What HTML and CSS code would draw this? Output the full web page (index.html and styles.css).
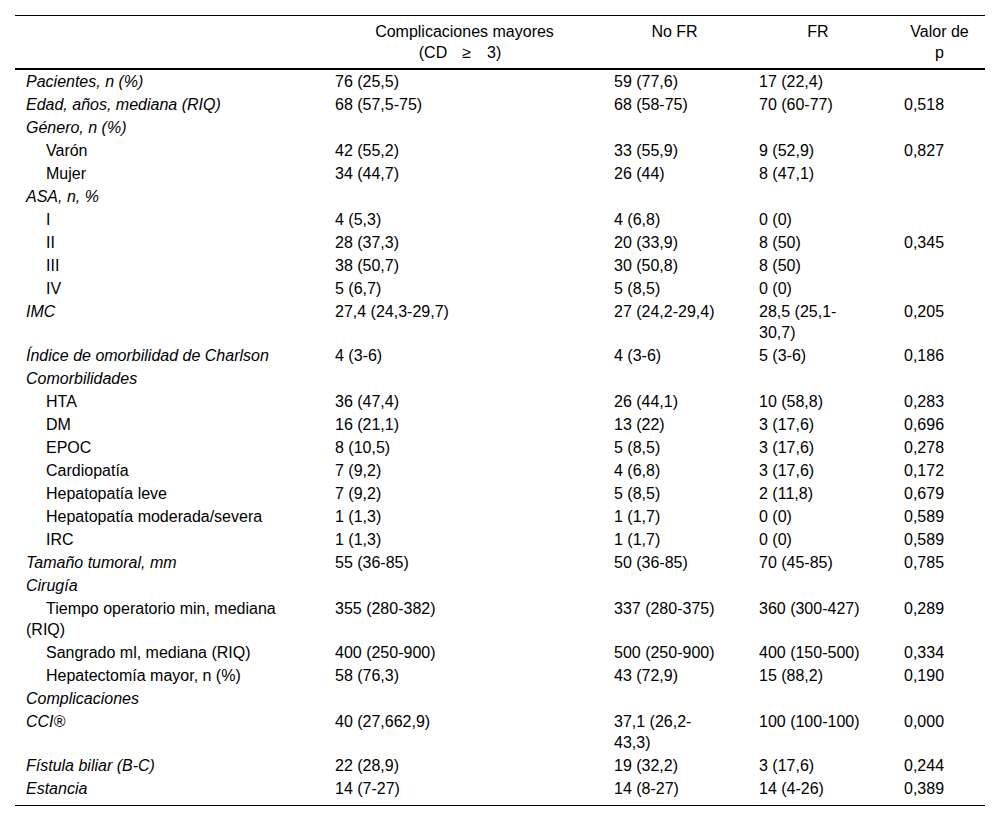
FILE: index.html
```html
<!DOCTYPE html>
<html lang="es">
<head>
<meta charset="utf-8">
<title>Tabla</title>
<link rel="stylesheet" href="styles.css">
</head>
<body>
<div class="page">
<table class="data">
  <colgroup>
    <col class="c1"><col class="c2"><col class="c3"><col class="c4"><col class="c5">
  </colgroup>
  <thead>
    <tr>
      <th class="h1"></th>
      <th class="h2">Complicaciones mayores<br><span class="cd">(CD<span class="gap g1"></span>≥<span class="gap g2"></span>3)<span class="gap g3"></span></span></th>
      <th class="h3">No FR</th>
      <th class="h4">FR</th>
      <th class="h5">Valor de<br>p</th>
    </tr>
  </thead>
  <tbody>
    <tr><td class="lab it">Pacientes, n (%)</td><td>76 (25,5)</td><td>59 (77,6)</td><td>17 (22,4)</td><td></td></tr>
    <tr><td class="lab it">Edad, años, mediana (RIQ)</td><td>68 (57,5-75)</td><td>68 (58-75)</td><td>70 (60-77)</td><td>0,518</td></tr>
    <tr><td class="lab it">Género, n (%)</td><td></td><td></td><td></td><td></td></tr>
    <tr><td class="lab sub">Varón</td><td>42 (55,2)</td><td>33 (55,9)</td><td>9 (52,9)</td><td>0,827</td></tr>
    <tr><td class="lab sub">Mujer</td><td>34 (44,7)</td><td>26 (44)</td><td>8 (47,1)</td><td></td></tr>
    <tr><td class="lab it">ASA, n, %</td><td></td><td></td><td></td><td></td></tr>
    <tr><td class="lab sub">I</td><td>4 (5,3)</td><td>4 (6,8)</td><td>0 (0)</td><td></td></tr>
    <tr><td class="lab sub">II</td><td>28 (37,3)</td><td>20 (33,9)</td><td>8 (50)</td><td>0,345</td></tr>
    <tr><td class="lab sub">III</td><td>38 (50,7)</td><td>30 (50,8)</td><td>8 (50)</td><td></td></tr>
    <tr><td class="lab sub">IV</td><td>5 (6,7)</td><td>5 (8,5)</td><td>0 (0)</td><td></td></tr>
    <tr><td class="lab it">IMC</td><td>27,4 (24,3-29,7)</td><td>27 (24,2-29,4)</td><td>28,5 (25,1-<br>30,7)</td><td>0,205</td></tr>
    <tr><td class="lab it">Índice de omorbilidad de Charlson</td><td>4 (3-6)</td><td>4 (3-6)</td><td>5 (3-6)</td><td>0,186</td></tr>
    <tr><td class="lab it">Comorbilidades</td><td></td><td></td><td></td><td></td></tr>
    <tr><td class="lab sub">HTA</td><td>36 (47,4)</td><td>26 (44,1)</td><td>10 (58,8)</td><td>0,283</td></tr>
    <tr><td class="lab sub">DM</td><td>16 (21,1)</td><td>13 (22)</td><td>3 (17,6)</td><td>0,696</td></tr>
    <tr><td class="lab sub">EPOC</td><td>8 (10,5)</td><td>5 (8,5)</td><td>3 (17,6)</td><td>0,278</td></tr>
    <tr><td class="lab sub">Cardiopatía</td><td>7 (9,2)</td><td>4 (6,8)</td><td>3 (17,6)</td><td>0,172</td></tr>
    <tr><td class="lab sub">Hepatopatía leve</td><td>7 (9,2)</td><td>5 (8,5)</td><td>2 (11,8)</td><td>0,679</td></tr>
    <tr><td class="lab sub">Hepatopatía moderada/severa</td><td>1 (1,3)</td><td>1 (1,7)</td><td>0 (0)</td><td>0,589</td></tr>
    <tr><td class="lab sub">IRC</td><td>1 (1,3)</td><td>1 (1,7)</td><td>0 (0)</td><td>0,589</td></tr>
    <tr><td class="lab it">Tamaño tumoral, mm</td><td>55 (36-85)</td><td>50 (36-85)</td><td>70 (45-85)</td><td>0,785</td></tr>
    <tr><td class="lab it">Cirugía</td><td></td><td></td><td></td><td></td></tr>
    <tr><td class="lab sub">Tiempo operatorio min, mediana<br>(RIQ)</td><td>355 (280-382)</td><td>337 (280-375)</td><td>360 (300-427)</td><td>0,289</td></tr>
    <tr><td class="lab sub">Sangrado ml, mediana (RIQ)</td><td>400 (250-900)</td><td>500 (250-900)</td><td>400 (150-500)</td><td>0,334</td></tr>
    <tr><td class="lab sub">Hepatectomía mayor, n (%)</td><td>58 (76,3)</td><td>43 (72,9)</td><td>15 (88,2)</td><td>0,190</td></tr>
    <tr><td class="lab it">Complicaciones</td><td></td><td></td><td></td><td></td></tr>
    <tr><td class="lab it">CCI®</td><td>40 (27,662,9)</td><td>37,1 (26,2-<br>43,3)</td><td>100 (100-100)</td><td>0,000</td></tr>
    <tr><td class="lab it">Fístula biliar (B-C)</td><td>22 (28,9)</td><td>19 (32,2)</td><td>3 (17,6)</td><td>0,244</td></tr>
    <tr class="last"><td class="lab it">Estancia</td><td>14 (7-27)</td><td>14 (8-27)</td><td>14 (4-26)</td><td>0,389</td></tr>
  </tbody>
</table>
</div>
</body>
</html>
```

FILE: styles.css
```css
html, body {
  margin: 0;
  padding: 0;
  background: #ffffff;
}

.page {
  padding: 15px 15px 0 15px;
  font-family: "Liberation Sans", Arial, sans-serif;
  font-size: 16px;
  color: #000;
}

.data {
  width: 970px;
  border-collapse: collapse;
  table-layout: fixed;
  border-top: 1px solid #000;
  border-bottom: 1px solid #000;
}

.c1 { width: 310px; }
.c2 { width: 279px; }
.c3 { width: 145px; }
.c4 { width: 145px; }
.c5 { width: 91px; }

.data th {
  font-weight: normal;
  text-align: center;
  vertical-align: top;
  line-height: 21px;
  padding: 5px 10px;
  border-bottom: 2px solid #000;
}

.data th.h3 { padding-right: 14px; }
.data th.h4 { padding-right: 17px; }

.cd { white-space: nowrap; }
.gap { display: inline-block; }
.g1 { width: 15px; }
.g2 { width: 16px; }
.g3 { width: 9px; }

.data td {
  vertical-align: top;
  line-height: 21px;
  padding: 1px 10px;
  text-align: left;
}

.data td.lab {
  padding-left: 11px;
}

.it { font-style: italic; }

.sub { text-indent: 20px; }

.data tr.last td {
  padding-bottom: 6px;
}
```
